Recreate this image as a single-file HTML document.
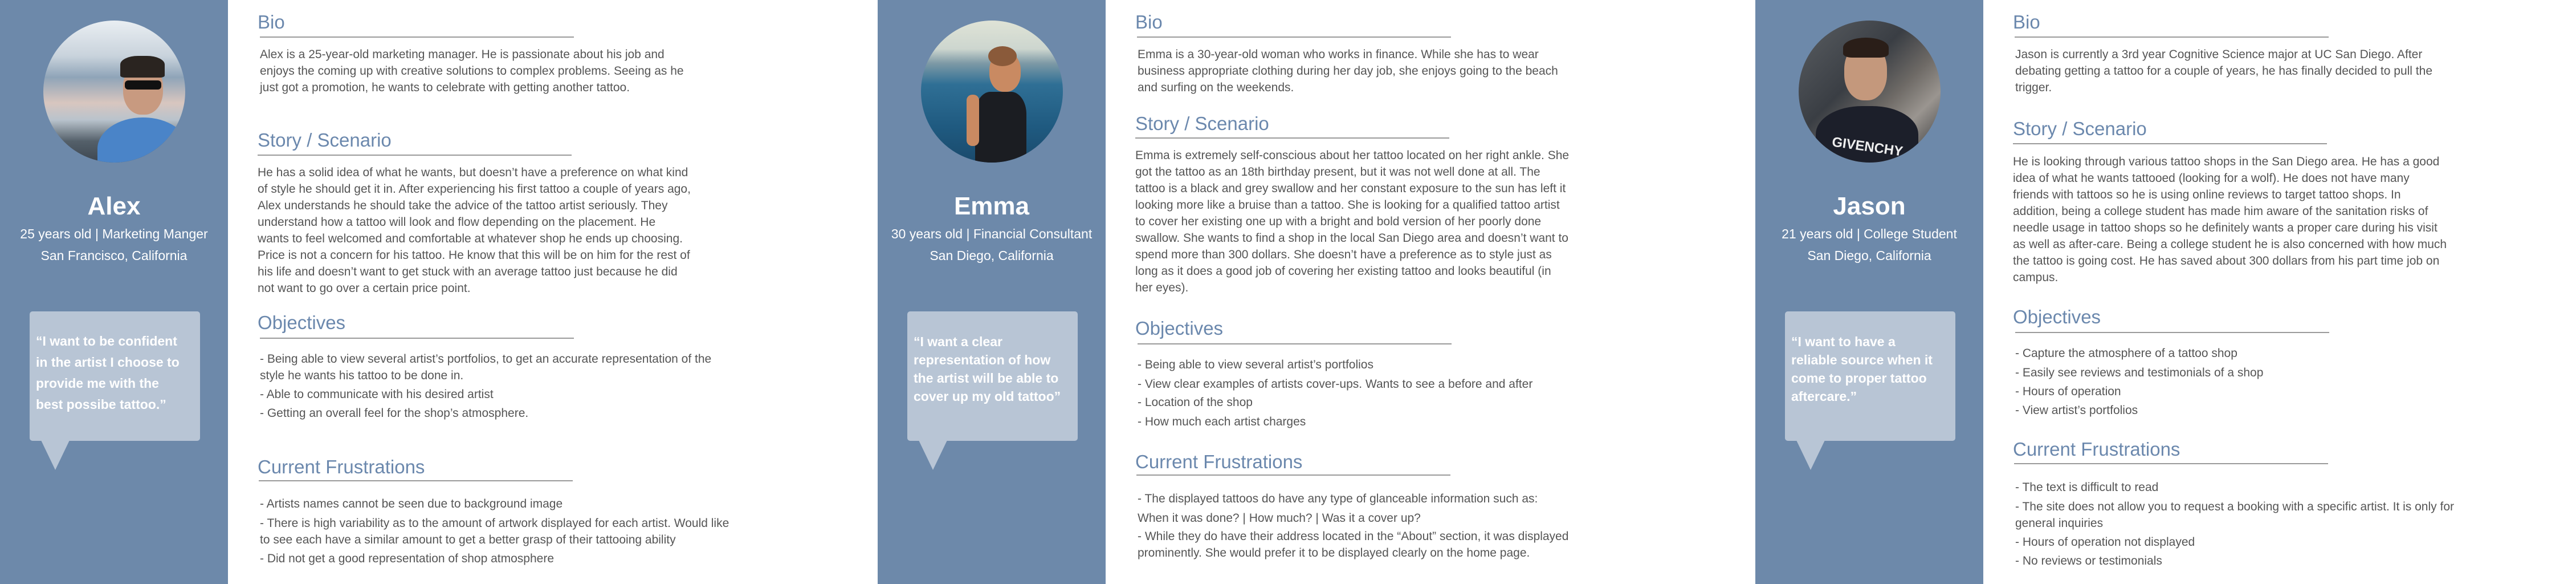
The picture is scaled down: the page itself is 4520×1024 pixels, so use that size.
<!DOCTYPE html>
<html><head><meta charset="utf-8">
<style>
*{margin:0;padding:0;box-sizing:border-box}
html,body{width:4520px;height:1024px;overflow:hidden;background:#fff}
body{position:relative;font-family:"Liberation Sans",sans-serif}
.side{position:absolute;top:0;width:400px;height:1024px;background:#6d89aa}
.photo{position:absolute;left:76px;top:36px;width:249px;height:249px;border-radius:50%;overflow:hidden}
.name{position:absolute;left:0;width:400px;text-align:center;color:#fff;font-size:44px;font-weight:bold;line-height:50px;top:337px}
.sub{position:absolute;left:0;width:400px;text-align:center;color:#fff;font-size:23px;line-height:30px;white-space:nowrap}
.qbox{position:absolute;left:52px;top:546px;width:299px;height:227px;background:#b8c5d5;border-radius:5px}
.tri{position:absolute;left:72px;top:772px;width:0;height:0;border-left:25px solid transparent;border-right:25px solid transparent;border-top:52px solid #b8c5d5}
.qt{position:absolute;left:63px;color:#fff;font-size:23px;font-weight:bold;white-space:nowrap}
.h{position:absolute;color:#6b88ad;font-size:33px;line-height:40px;white-space:nowrap}
.ul{position:absolute;height:2px;background:#9a9a9a;width:551px}
.t{position:absolute;color:#555;font-size:21px;line-height:29px;white-space:nowrap}
.panel{position:absolute;top:0;width:1540px;height:1024px}
</style></head><body>

<!-- PANEL 1 ALEX -->
<div class="panel" style="left:0">
 <div class="side" style="left:0">
  <div class="photo" style="background:linear-gradient(180deg,#e9eef2 0%,#c9d3dc 25%,#8fa4b8 40%,#d8c6bf 58%,#b9c3cc 70%,#54606a 85%,#3d4650 100%)">
   <div style="position:absolute;left:140px;top:75px;width:70px;height:90px;border-radius:45%;background:#c89a80"></div>
   <div style="position:absolute;left:135px;top:62px;width:78px;height:38px;border-radius:40% 40% 10% 10%;background:#2a2420"></div>
   <div style="position:absolute;left:143px;top:105px;width:64px;height:16px;background:#111;border-radius:6px"></div>
   <div style="position:absolute;left:95px;top:170px;width:160px;height:110px;border-radius:50% 50% 0 0;background:#4a84c8"></div>
  </div>
 </div>
 <div class="name" style="left:0">Alex</div>
 <div class="sub" style="top:395px">25 years old | Marketing Manger</div>
 <div class="sub" style="top:433px">San Francisco, California</div>
 <div class="qbox"></div><div class="tri"></div>
 <div class="qt" style="top:580px;line-height:37px">“I want to be confident<br>in the artist I choose to<br>provide me with the<br>best possibe tattoo.”</div>

 <div class="h" style="left:452px;top:19px">Bio</div>
 <div class="ul" style="left:456px;top:64px"></div>
 <div class="t" style="left:456px;top:81px">Alex is a 25-year-old marketing manager. He is passionate about his job and<br>enjoys the coming up with creative solutions to complex problems. Seeing as he<br>just got a promotion, he wants to celebrate with getting another tattoo.</div>

 <div class="h" style="left:452px;top:226px">Story / Scenario</div>
 <div class="ul" style="left:452px;top:271px"></div>
 <div class="t" style="left:452px;top:288px">He has a solid idea of what he wants, but doesn’t have a preference on what kind<br>of style he should get it in. After experiencing his first tattoo a couple of years ago,<br>Alex understands he should take the advice of the tattoo artist seriously. They<br>understand how a tattoo will look and flow depending on the placement. He<br>wants to feel welcomed and comfortable at whatever shop he ends up choosing.<br>Price is not a concern for his tattoo. He know that this will be on him for the rest of<br>his life and doesn’t want to get stuck with an average tattoo just because he did<br>not want to go over a certain price point.</div>

 <div class="h" style="left:452px;top:546px">Objectives</div>
 <div class="ul" style="left:456px;top:592px"></div>
 <div class="t" style="left:456px;top:615px">- Being able to view several artist’s portfolios, to get an accurate representation of the<br>style he wants his tattoo to be done in.</div>
 <div class="t" style="left:456px;top:677px">- Able to communicate with his desired artist</div>
 <div class="t" style="left:456px;top:710px">- Getting an overall feel for the shop’s atmosphere.</div>

 <div class="h" style="left:452px;top:799px">Current Frustrations</div>
 <div class="ul" style="left:454px;top:842px"></div>
 <div class="t" style="left:456px;top:869px">- Artists names cannot be seen due to background image</div>
 <div class="t" style="left:456px;top:903px">- There is high variability as to the amount of artwork displayed for each artist. Would like<br>to see each have a similar amount to get a better grasp of their tattooing ability</div>
 <div class="t" style="left:456px;top:965px">- Did not get a good representation of shop atmosphere</div>
</div>

<!-- PANEL 2 EMMA -->
<div class="panel" style="left:1540px">
 <div class="side" style="left:0">
  <div class="photo" style="background:linear-gradient(180deg,#dfe3d6 0%,#cdd6cf 20%,#7e9aa6 30%,#2f6f95 45%,#1f5a80 75%,#1a4a6c 100%)">
   <div style="position:absolute;left:120px;top:55px;width:55px;height:70px;border-radius:45%;background:#c98a62"></div>
   <div style="position:absolute;left:118px;top:45px;width:50px;height:35px;border-radius:50%;background:#8a5a3a"></div>
   <div style="position:absolute;left:95px;top:125px;width:90px;height:130px;border-radius:30% 30% 0 0;background:#1b1d22"></div>
   <div style="position:absolute;left:80px;top:130px;width:22px;height:90px;border-radius:10px;background:#c98a62"></div>
  </div>
 </div>
 <div class="name">Emma</div>
 <div class="sub" style="top:395px">30 years old | Financial Consultant</div>
 <div class="sub" style="top:433px">San Diego, California</div>
 <div class="qbox"></div><div class="tri"></div>
 <div class="qt" style="top:583px;line-height:32px">“I want a clear<br>representation of how<br>the artist will be able to<br>cover up my old tattoo”</div>

 <div class="h" style="left:452px;top:19px">Bio</div>
 <div class="ul" style="left:455px;top:64px"></div>
 <div class="t" style="left:456px;top:81px">Emma is a 30-year-old woman who works in finance. While she has to wear<br>business appropriate clothing during her day job, she enjoys going to the beach<br>and surfing on the weekends.</div>

 <div class="h" style="left:452px;top:197px">Story / Scenario</div>
 <div class="ul" style="left:452px;top:241px"></div>
 <div class="t" style="left:452px;top:258px">Emma is extremely self-conscious about her tattoo located on her right ankle. She<br>got the tattoo as an 18th birthday present, but it was not well done at all. The<br>tattoo is a black and grey swallow and her constant exposure to the sun has left it<br>looking more like a bruise than a tattoo. She is looking for a qualified tattoo artist<br>to cover her existing one up with a bright and bold version of her poorly done<br>swallow. She wants to find a shop in the local San Diego area and doesn’t want to<br>spend more than 300 dollars. She doesn’t have a preference as to style just as<br>long as it does a good job of covering her existing tattoo and looks beautiful (in<br>her eyes).</div>

 <div class="h" style="left:452px;top:556px">Objectives</div>
 <div class="ul" style="left:456px;top:602px"></div>
 <div class="t" style="left:456px;top:625px">- Being able to view several artist’s portfolios</div>
 <div class="t" style="left:456px;top:659px">- View clear examples of artists cover-ups. Wants to see a before and after</div>
 <div class="t" style="left:456px;top:691px">- Location of the shop</div>
 <div class="t" style="left:456px;top:725px">- How much each artist charges</div>

 <div class="h" style="left:452px;top:790px">Current Frustrations</div>
 <div class="ul" style="left:454px;top:832px"></div>
 <div class="t" style="left:456px;top:860px">- The displayed tattoos do have any type of glanceable information such as:</div>
 <div class="t" style="left:456px;top:894px">When it was done? | How much? | Was it a cover up?</div>
 <div class="t" style="left:456px;top:926px">- While they do have their address located in the “About” section, it was displayed<br>prominently. She would prefer it to be displayed clearly on the home page.</div>
</div>

<!-- PANEL 3 JASON -->
<div class="panel" style="left:3080px;width:1440px">
 <div class="side" style="left:0">
  <div class="photo" style="background:linear-gradient(135deg,#5a5e62 0%,#3a3e44 40%,#6e6a66 60%,#9a9590 75%,#2b2d30 100%)">
   <div style="position:absolute;left:80px;top:40px;width:75px;height:100px;border-radius:45%;background:#c4987c"></div>
   <div style="position:absolute;left:78px;top:30px;width:80px;height:35px;border-radius:50% 50% 20% 20%;background:#2a1e18"></div>
   <div style="position:absolute;left:30px;top:150px;width:180px;height:110px;border-radius:45% 45% 0 0;background:#1c1f2a"></div>
   <div style="position:absolute;left:58px;top:208px;color:#eee;font-size:24px;font-weight:bold;transform:rotate(8deg)">GIVENCHY</div>
  </div>
 </div>
 <div class="name">Jason</div>
 <div class="sub" style="top:395px">21 years old | College Student</div>
 <div class="sub" style="top:433px">San Diego, California</div>
 <div class="qbox"></div><div class="tri"></div>
 <div class="qt" style="top:583px;line-height:32px">“I want to have a<br>reliable source when it<br>come to proper tattoo<br>aftercare.”</div>

 <div class="h" style="left:452px;top:19px">Bio</div>
 <div class="ul" style="left:455px;top:64px"></div>
 <div class="t" style="left:456px;top:81px">Jason is currently a 3rd year Cognitive Science major at UC San Diego. After<br>debating getting a tattoo for a couple of years, he has finally decided to pull the<br>trigger.</div>

 <div class="h" style="left:452px;top:206px">Story / Scenario</div>
 <div class="ul" style="left:452px;top:251px"></div>
 <div class="t" style="left:452px;top:269px">He is looking through various tattoo shops in the San Diego area. He has a good<br>idea of what he wants tattooed (looking for a wolf). He does not have many<br>friends with tattoos so he is using online reviews to target tattoo shops. In<br>addition, being a college student has made him aware of the sanitation risks of<br>needle usage in tattoo shops so he definitely wants a proper care during his visit<br>as well as after-care. Being a college student he is also concerned with how much<br>the tattoo is going cost. He has saved about 300 dollars from his part time job on<br>campus.</div>

 <div class="h" style="left:452px;top:536px">Objectives</div>
 <div class="ul" style="left:456px;top:582px"></div>
 <div class="t" style="left:456px;top:605px">- Capture the atmosphere of a tattoo shop</div>
 <div class="t" style="left:456px;top:639px">- Easily see reviews and testimonials of a shop</div>
 <div class="t" style="left:456px;top:672px">- Hours of operation</div>
 <div class="t" style="left:456px;top:705px">- View artist’s portfolios</div>

 <div class="h" style="left:452px;top:768px">Current Frustrations</div>
 <div class="ul" style="left:454px;top:812px"></div>
 <div class="t" style="left:456px;top:840px">- The text is difficult to read</div>
 <div class="t" style="left:456px;top:874px">- The site does not allow you to request a booking with a specific artist. It is only for<br>general inquiries</div>
 <div class="t" style="left:456px;top:936px">- Hours of operation not displayed</div>
 <div class="t" style="left:456px;top:969px">- No reviews or testimonials</div>
</div>
</body></html>
